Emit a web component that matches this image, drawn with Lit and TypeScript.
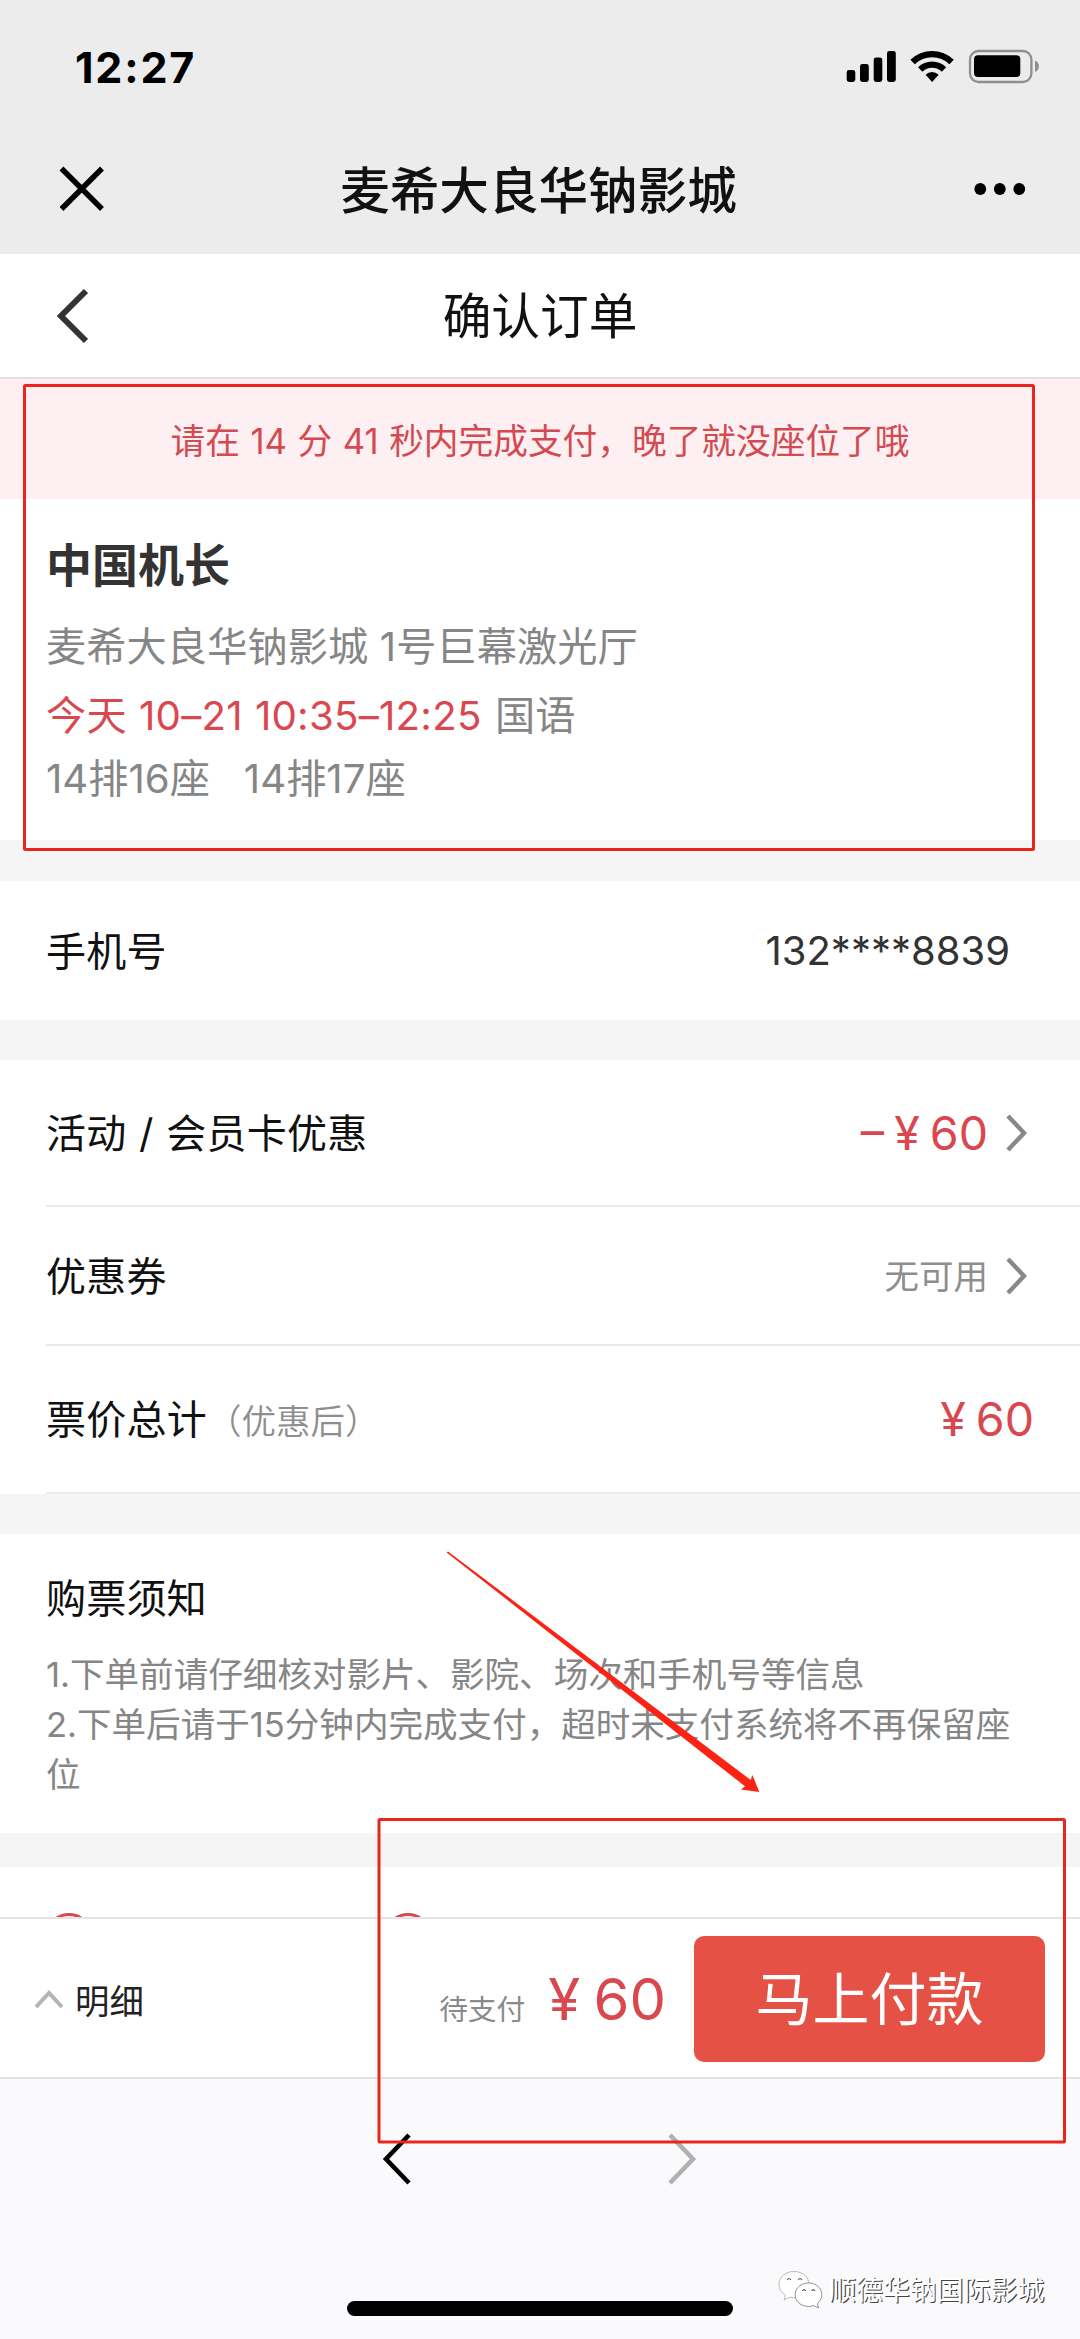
import { LitElement, html, css } from "lit";
import { customElement, property } from "lit/decorators.js";

const chevron = (points: string, w: number, h: number, color: string, stroke: number) => html`
  <svg width=${w} height=${h} viewBox="0 0 ${w} ${h}">
    <polyline points=${points} fill="none" stroke=${color} stroke-width=${stroke} />
  </svg>`;

@customElement("status-bar")
export class StatusBar extends LitElement {
  static styles = css`
    :host {
      display: flex;
      justify-content: space-between;
      height: 127px;
      padding: 0 40px 0 75px;
      box-sizing: border-box;
    }
    .time {
      font: 700 43px/60px Inter, sans-serif;
      padding-top: 37px;
      letter-spacing: 1.8px;
      color: #000;
    }
    .icons {
      padding-top: 46px;
    }
  `;
  render() {
    return html`
      <div class="time">12:27</div>
      <svg class="icons" width="194" height="42" viewBox="846 46 194 42">
        <rect x="846.7" y="70" width="8.6" height="12" rx="2.4" />
        <rect x="860" y="64" width="8.8" height="18" rx="2.4" />
        <rect x="873.7" y="57.5" width="8.6" height="24.5" rx="2.4" />
        <rect x="887" y="51" width="8.8" height="31" rx="2.4" />
        <path d="M910.4 59.8 A31 31 0 0 1 953.8 59.8 L949.4 64.2 A25 25 0 0 0 914.8 64.2 Z" />
        <path d="M918 67.3 A20 20 0 0 1 946.2 67.3 L941.8 71.7 A14 14 0 0 0 922.4 71.7 Z" />
        <path d="M925.6 74.8 A9.2 9.2 0 0 1 938.6 74.8 L932.1 82 Z" />
        <rect x="970" y="51" width="61.4" height="31" rx="8.5" fill="none" stroke="#8e8e8e" stroke-width="2.3" />
        <rect x="974" y="55.3" width="46.3" height="21.8" rx="4" />
        <path d="M1035 60.5 A6.2 6.2 0 0 1 1035 72 Z" fill="#8e8e8e" />
      </svg>
    `;
  }
}

@customElement("order-row")
export class OrderRow extends LitElement {
  @property() label = "";
  @property() note = "";
  static styles = css`
    :host {
      display: flex;
      align-items: center;
      justify-content: space-between;
      margin-left: 46px;
      box-sizing: border-box;
      color: #111;
      font-size: 40px;
      line-height: 60px;
      white-space: nowrap;
    }
    .label {
      padding-top: 4px;
      font-weight: 400;
      word-spacing: 1px;
      letter-spacing: 0.25px;
    }
    .note {
      font-size: 34.5px;
      font-weight: 350;
      letter-spacing: 0;
      color: #8e8e8e;
    }
    .value {
      display: flex;
      align-items: center;
    }
  `;
  render() {
    return html`
      <div class="label">${this.label}<span class="note">${this.note}</span></div>
      <div class="value"><slot></slot></div>
    `;
  }
}

@customElement("app-root")
export class AppRoot extends LitElement {
  static styles = css`
    :host {
      display: block;
      position: relative;
      width: 1080px;
      height: 2339px;
      overflow: hidden;
      background: #f5f5f5;
      font-family: Inter, "Noto Sans CJK SC", sans-serif;
      font-weight: 370;
      color: #111;
    }
    svg {
      display: block;
      flex: none;
    }
    .top {
      height: 254px;
      background: #ececec;
    }
    .title-bar {
      display: grid;
      grid-template-columns: 1fr auto 1fr;
      align-items: center;
      height: 124px;
      padding: 0 53px 0 58px;
    }
    .title {
      margin-right: 8px;
      padding-top: 3px;
      font-size: 49.6px;
      font-weight: 500;
      line-height: 70px;
    }
    .end {
      justify-self: end;
    }
    .page-bar {
      display: grid;
      grid-template-columns: 1fr auto 1fr;
      align-items: center;
      height: 125px;
      padding: 0 56px;
      box-sizing: border-box;
      background: #fff;
      border-bottom: 2px solid #e3dfe2;
    }
    .page-title {
      padding-top: 3px;
      font-size: 48.7px;
      line-height: 70px;
      font-weight: 400;
    }
    .timer {
      height: 120px;
      line-height: 125px;
      text-align: center;
      background: #fef0f2;
      color: #d34a50;
      font-size: 34.7px;
      word-spacing: 0.8px;
    }
    .show {
      height: 341px;
      padding: 31px 46px 0;
      box-sizing: border-box;
      background: #fff;
      color: #868686;
      font-size: 40.2px;
      white-space: nowrap;
    }
    .movie {
      font-size: 46px;
      line-height: 70px;
      font-weight: 700;
      color: #333;
    }
    .line {
      line-height: 70px;
    }
    .hall {
      padding-top: 12px;
      margin-bottom: -1px;
      letter-spacing: 0.1px;
    }
    .seats {
      padding-top: 1px;
      line-height: 54px;
      white-space: pre;
    }
    .red {
      color: #d9474f;
      font-weight: 400;
      word-spacing: 0.5px;
      letter-spacing: 0.25px;
    }
    .lang {
      padding-left: 2px;
    }
    .card {
      background: #fff;
      margin-top: 40px;
    }
    .phone {
      margin-top: 41px;
    }
    .phone order-row {
      height: 139px;
      padding-right: 70px;
    }
    .number {
      color: #333;
    }
    .row-a {
      height: 147px;
      border-bottom: 2px solid #e9e9e9;
      padding-right: 52px;
    }
    .row-b {
      height: 139px;
      border-bottom: 2px solid #e9e9e9;
      padding-right: 52px;
    }
    .row-c {
      height: 148px;
      border-bottom: 2px solid #ebebeb;
      padding-right: 46px;
    }
    .amount {
      color: #d9474f;
      font-size: 46.5px;
      font-weight: 400;
      word-spacing: -3px;
    }
    .none {
      color: #8e8e8e;
      font-size: 34.5px;
      padding-top: 2px;
    }
    .go {
      margin-left: 18px;
    }
    .notice {
      height: 299px;
      padding: 35px 46px 0;
      box-sizing: border-box;
    }
    .notice-title {
      font-size: 40.2px;
      font-weight: 400;
      line-height: 60px;
    }
    .notice-text {
      padding-top: 21px;
      font-size: 34.55px;
      line-height: 50px;
      color: #868686;
      white-space: nowrap;
    }
    .more {
      display: flex;
      gap: 291px;
      height: 50px;
      margin-top: 34px;
      padding: 46px 0 0 45px;
      box-sizing: border-box;
      overflow: hidden;
      background: #fff;
    }
    .ring {
      flex: none;
      width: 48px;
      height: 48px;
      box-sizing: border-box;
      border: 3px solid #d9474f;
      border-radius: 50%;
    }
    .pay-bar {
      display: flex;
      align-items: center;
      height: 162px;
      padding: 2px 35px 0 34px;
      box-sizing: border-box;
      background: #fff;
      border-top: 2px solid #e4e4e4;
      border-bottom: 2px solid #e2e2e4;
    }
    .detail {
      flex: 1;
      padding-left: 11px;
      font-size: 34.4px;
      color: #222;
    }
    .due {
      padding-top: 16px;
      font-size: 28.7px;
      color: #8a8a8a;
    }
    .total {
      margin: 0 28px 0 23px;
      font-size: 58px;
      word-spacing: -3px;
      color: #d9474f;
    }
    .pay {
      width: 351px;
      height: 126px;
      border-radius: 10px;
      background: #e55144;
      color: #fff;
      font-size: 57px;
      line-height: 127px;
      text-align: center;
    }
    .browser {
      display: flex;
      flex-direction: column;
      align-items: center;
      height: 260px;
      background: #fafafc;
    }
    .history {
      display: flex;
      gap: 257px;
      padding: 53px 2px 0 0;
    }
    .home {
      width: 386px;
      height: 15px;
      margin-top: 115px;
      border-radius: 8px;
      background: #000;
    }
    .watermark {
      position: absolute;
      left: 776px;
      top: 2266px;
      display: flex;
      align-items: center;
      gap: 5px;
      font-size: 26.9px;
      line-height: 48px;
      color: #fff;
      text-shadow: 1.2px 1.2px 0.6px #444;
    }
    .marks {
      position: absolute;
      left: 0;
      top: 0;
    }
  `;

  render() {
    return html`
      <div class="top">
        <status-bar></status-bar>
        <div class="title-bar">
          <svg width="48" height="48" viewBox="0 0 48 48">
            <path d="M3.5 3.5 L44 44 M44 3.5 L3.5 44" stroke="#000" stroke-width="5.4" />
          </svg>
          <div class="title">麦希大良华钠影城</div>
          <svg class="end" width="54" height="14" viewBox="0 0 54 14">
            <circle cx="7.3" cy="7" r="5.9" /><circle cx="26.8" cy="7" r="5.9" /><circle cx="46.3" cy="7" r="5.9" />
          </svg>
        </div>
      </div>
      <div class="page-bar">
        ${chevron("30,3 5,28 30,53", 34, 56, "#333", 6)}
        <div class="page-title">确认订单</div>
      </div>
      <div class="timer">请在 14 分 41 秒内完成支付，晚了就没座位了哦</div>
      <div class="show">
        <div class="movie">中国机长</div>
        <div class="line hall">麦希大良华钠影城 1号巨幕激光厅</div>
        <div class="line"><span class="red">今天 10–21 10:35–12:25</span> <span class="lang">国语</span></div>
        <div class="seats">14排16座   14排17座</div>
      </div>
      <div class="card phone">
        <order-row label="手机号"><span class="number">132****8839</span></order-row>
      </div>
      <div class="card">
        <order-row class="row-a" label="活动 / 会员卡优惠">
          <span class="amount">– ¥ 60</span>
          <span class="go">${chevron("2,2 18,19 2,36", 22, 38, "#888", 4.4)}</span>
        </order-row>
        <order-row class="row-b" label="优惠券">
          <span class="none">无可用</span>
          <span class="go">${chevron("2,2 18,19 2,36", 22, 38, "#888", 4.4)}</span>
        </order-row>
        <order-row class="row-c" label="票价总计" note="（优惠后）">
          <span class="amount">¥ 60</span>
        </order-row>
      </div>
      <div class="card notice">
        <div class="notice-title">购票须知</div>
        <div class="notice-text">
          1.下单前请仔细核对影片、影院、场次和手机号等信息<br />2.下单后请于15分钟内完成支付，超时未支付系统将不再保留座<br />位
        </div>
      </div>
      <div class="more"><div class="ring"></div><div class="ring"></div></div>
      <div class="pay-bar">
        ${chevron("2,19 15,5 28,19", 30, 22, "#b4b4b4", 4)}
        <div class="detail">明细</div>
        <div class="due">待支付</div>
        <div class="total">¥ 60</div>
        <div class="pay">马上付款</div>
      </div>
      <div class="browser">
        <div class="history">
          ${chevron("27,3 4,27 27,51", 29, 54, "#000", 4.6)}
          ${chevron("2,3 25,27 2,51", 29, 54, "#b0b0b0", 4.6)}
        </div>
        <div class="home"></div>
      </div>
      <div class="watermark">
        <svg width="48" height="46" viewBox="776 2266 48 46">
          <g fill="#fff" stroke="#aaa" stroke-width="0.8">
            <path d="M794 2270.5 C785.5 2270.5 779 2276 779 2283.5 C779 2288 781.5 2291.7 785.6 2294.2 L784 2299 L789.7 2296.2 C801 2298.5 809 2292 809 2283.5 C809 2276 802.5 2270.5 794 2270.5 Z" />
            <path stroke="#777" d="M808.5 2282 C801 2282 795.2 2287 795.2 2293.7 C795.2 2300.5 801 2305.4 808.5 2305.4 C810.4 2305.4 812 2305.1 813.6 2304.5 L818.6 2307 L817.3 2302.6 C820 2300.4 821.8 2297.4 821.8 2293.7 C821.8 2287 816 2282 808.5 2282 Z" />
            <path fill="none" stroke="#555" stroke-width="1.1" d="M787.2 2279 q1.8 -3 3.6 0 M798.2 2279 q1.8 -3 3.6 0 M802.4 2290 q1.7 -2.8 3.4 0 M811.6 2290 q1.7 -2.8 3.4 0" />
          </g>
        </svg>
        <span>顺德华钠国际影城</span>
      </div>
      <svg class="marks" width="1080" height="2339" viewBox="0 0 1080 2339">
        <g fill="none" stroke="#e8261c" stroke-width="3">
          <rect x="24.5" y="385.5" width="1009" height="464" rx="1" />
          <rect x="379" y="1819.5" width="685.5" height="322.5" rx="1" />
        </g>
        <path d="M446.6 1552.4 L448 1551.4 L750.7 1780 L752.3 1775 L759.4 1792 L741 1789.5 L745 1786.3 Z" fill="#fb2314" />
      </svg>
    `;
  }
}
